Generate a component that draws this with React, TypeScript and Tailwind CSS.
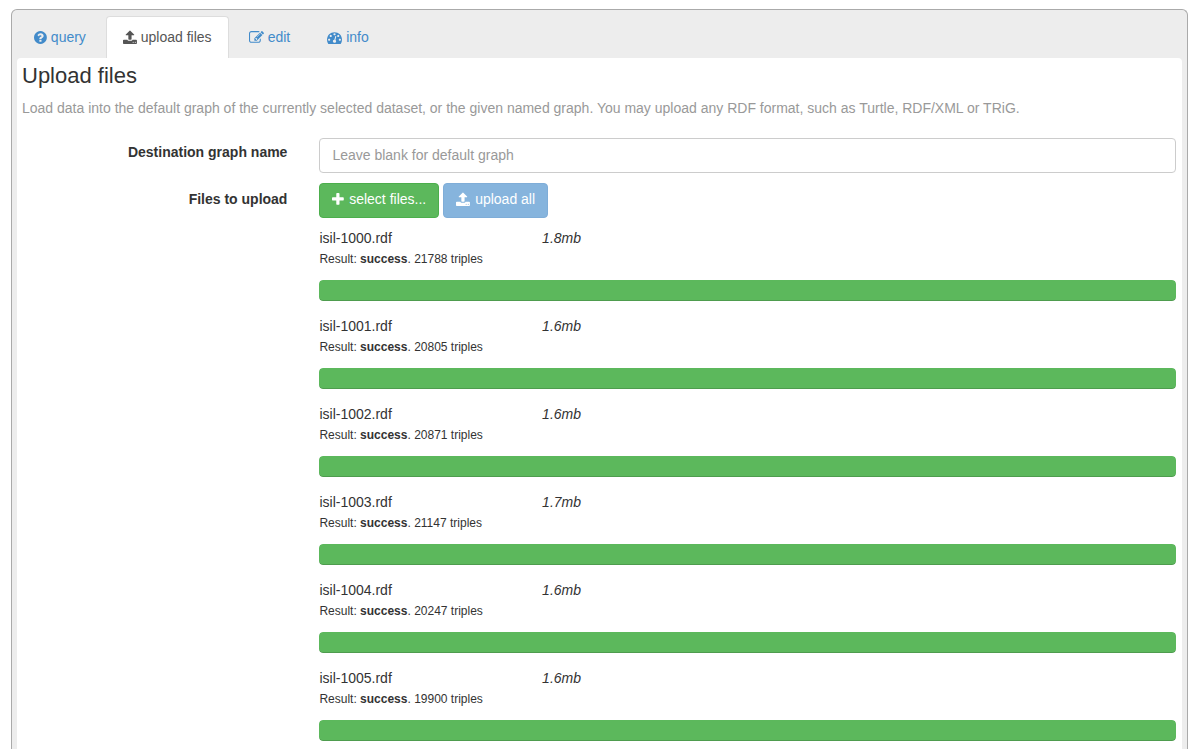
import React, { useState } from 'react';

const icons = {
  question: {
    viewBox: '128 0 1536 1792',
    path: 'M1024 1376v-192q0-14-9-23t-23-9h-192q-14 0-23 9t-9 23v192q0 14 9 23t23 9h192q14 0 23-9t9-23zm256-672q0-88-55.5-163t-138.5-116-170-41q-243 0-371 213-15 24 8 42l132 100q7 6 19 6 16 0 25-12 53-68 86-92 34-24 86-24 48 0 85.5 26t37.5 59q0 38-20 61t-68 45q-63 28-115.5 86.5t-52.5 125.5v36q0 14 9 23t23 9h192q14 0 23-9t9-23q0-19 21.5-49.5t54.5-49.5q32-18 49-28.5t46-35 44.5-48 28-60.5 12.5-81zm384 192q0 209-103 385.5t-279.5 279.5-385.5 103-385.5-103-279.5-279.5-103-385.5 103-385.5 279.5-279.5 385.5-103 385.5 103 279.5 279.5 103 385.5z',
  },
  upload: {
    viewBox: '64 0 1664 1792',
    path: 'M1344 1472q0-26-19-45t-45-19-45 19-19 45 19 45 45 19 45-19 19-45zm256 0q0-26-19-45t-45-19-45 19-19 45 19 45 45 19 45-19 19-45zm128-224v320q0 40-28 68t-68 28h-1472q-40 0-68-28t-28-68v-320q0-40 28-68t68-28h427q21 56 70.5 92t110.5 36h256q61 0 110.5-36t70.5-92h427q40 0 68 28t28 68zm-325-648q-17 40-59 40h-256v448q0 26-19 45t-45 19h-256q-26 0-45-19t-19-45v-448h-256q-42 0-59-40-17-39 14-69l448-448q18-19 45-19t45 19l448 448q31 30 14 69z',
  },
  edit: {
    viewBox: '0 0 1792 1792',
    path: 'M888 1184l116-116-152-152-116 116v56h96v96h56zm440-720q-16-16-33 1l-350 350q-17 17-1 33t33-1l350-350q17-17 1-33zm80 594v190q0 119-84.5 203.5t-203.5 84.5h-832q-119 0-203.5-84.5t-84.5-203.5v-832q0-119 84.5-203.5t203.5-84.5h832q63 0 117 25 15 7 18 23 3 17-9 29l-49 49q-14 14-32 8-23-6-45-6h-832q-66 0-113 47t-47 113v832q0 66 47 113t113 47h832q66 0 113-47t47-113v-126q0-13 9-22l64-64q15-15 35-7t20 29zm-96-738l288 288-672 672h-288v-288zm444 132l-92 92-288-288 92-92q28-28 68-28t68 28l152 152q28 28 28 68t-28 68z',
  },
  dashboard: {
    viewBox: '0 0 1792 1792',
    path: 'M384 1152q0-53-37.5-90.5t-90.5-37.5-90.5 37.5-37.5 90.5 37.5 90.5 90.5 37.5 90.5-37.5 37.5-90.5zm192-448q0-53-37.5-90.5t-90.5-37.5-90.5 37.5-37.5 90.5 37.5 90.5 90.5 37.5 90.5-37.5 37.5-90.5zm428 481l101-382q6-26-7.5-48.5t-38.5-29.5-48 6.5-30 39.5l-101 382q-60 5-107 43.5t-63 98.5q-20 77 20 146t117 89 146-20 89-117q16-60-6-117t-72-91zm660-33q0-53-37.5-90.5t-90.5-37.5-90.5 37.5-37.5 90.5 37.5 90.5 90.5 37.5 90.5-37.5 37.5-90.5zm-640-640q0-53-37.5-90.5t-90.5-37.5-90.5 37.5-37.5 90.5 37.5 90.5 90.5 37.5 90.5-37.5 37.5-90.5zm448 192q0-53-37.5-90.5t-90.5-37.5-90.5 37.5-37.5 90.5 37.5 90.5 90.5 37.5 90.5-37.5 37.5-90.5zm320 448q0 261-141 483-19 29-54 29h-1402q-35 0-54-29-141-221-141-483 0-182 71-348t191-286 286-191 348-71 348 71 286 191 191 286 71 348z',
  },
  plus: {
    viewBox: '192 0 1408 1792',
    path: 'M1600 736v192q0 40-28 68t-68 28h-416v416q0 40-28 68t-68 28h-192q-40 0-68-28t-28-68v-416h-416q-40 0-68-28t-28-68v-192q0-40 28-68t68-28h416v-416q0-40 28-68t68-28h192q40 0 68 28t28 68v416h416q40 0 68 28t28 68z',
  },
};

type IconName = keyof typeof icons;

const Icon = ({ name }: { name: IconName }) => (
  <svg viewBox={icons[name].viewBox} fill="currentColor" aria-hidden="true" className="h-[15px] w-auto shrink-0">
    <path d={icons[name].path} />
  </svg>
);

const tabs: { id: string; label: string; icon: IconName }[] = [
  { id: 'query', label: 'query', icon: 'question' },
  { id: 'upload', label: 'upload files', icon: 'upload' },
  { id: 'edit', label: 'edit', icon: 'edit' },
  { id: 'info', label: 'info', icon: 'dashboard' },
];

const files = [
  { name: 'isil-1000.rdf', size: '1.8mb', triples: 21788, progress: 100 },
  { name: 'isil-1001.rdf', size: '1.6mb', triples: 20805, progress: 100 },
  { name: 'isil-1002.rdf', size: '1.6mb', triples: 20871, progress: 100 },
  { name: 'isil-1003.rdf', size: '1.7mb', triples: 21147, progress: 100 },
  { name: 'isil-1004.rdf', size: '1.6mb', triples: 20247, progress: 100 },
  { name: 'isil-1005.rdf', size: '1.6mb', triples: 19900, progress: 100 },
];

const App = () => {
  const [graphName, setGraphName] = useState('');

  return (
    <div className="h-screen overflow-hidden bg-white pl-[11px] pr-3 pt-[9px] font-['Liberation_Sans',Arial,sans-serif] text-[14px] leading-[21px] text-[#333]">
      <div className="rounded-t-md border border-b-0 border-[#aaa] bg-[#ededed] px-[5px] pt-[6px]">
        <nav className="flex gap-[3px]">
          {tabs.map((tab) => (
            <a
              key={tab.id}
              href={`#${tab.id}`}
              className={
                tab.id === 'upload'
                  ? 'flex items-center gap-1 rounded-t border border-b-0 border-[#ddd] bg-white px-4 py-[10px] text-[#555]'
                  : 'flex items-center gap-1 rounded-t border border-b-0 border-transparent px-4 py-[10px] text-[#428bca]'
              }
            >
              <Icon name={tab.icon} />
              {tab.label}
            </a>
          ))}
        </nav>

        <main className="min-h-screen rounded-t-sm bg-white pl-[5px] pr-[6px] pt-1">
          <h1 className="text-[22px] leading-7">Upload files</h1>
          <p className="mt-2 text-[#999]">
            Load data into the default graph of the currently selected dataset, or the given named graph. You may upload any RDF format, such as Turtle, RDF/XML or TRiG.
          </p>

          <div className="mt-[19px] flex gap-8">
            <label htmlFor="graph-name" className="w-[23%] shrink-0 pt-1 text-right font-bold">
              Destination graph name
            </label>
            <input
              id="graph-name"
              type="text"
              value={graphName}
              onChange={(e) => setGraphName(e.target.value)}
              placeholder="Leave blank for default graph"
              className="h-[35px] min-w-0 flex-1 rounded border border-[#ccc] bg-white px-3 pb-[2px] placeholder:text-[#999]"
            />
          </div>

          <div className="mt-[10px] flex gap-8">
            <div className="w-[23%] shrink-0 pt-[6px] text-right font-bold">Files to upload</div>
            <div className="min-w-0 flex-1">
              <div className="flex gap-1">
                <button type="button" className="flex h-[35px] items-center gap-[5px] rounded border border-[#4cae4c] bg-[#5cb85c] px-3 pb-[2px] text-white">
                  <Icon name="plus" />
                  select files...
                </button>
                <button type="button" disabled className="flex h-[35px] items-center gap-[5px] rounded border border-[#7fadd8] bg-[#86b4dd] px-3 pb-[2px] text-white">
                  <Icon name="upload" />
                  upload all
                </button>
              </div>

              <ul className="mt-[10px]">
                {files.map((file) => (
                  <li key={file.name} className="mb-[15px]">
                    <div className="flex">
                      <span className="w-[26%]">{file.name}</span>
                      <em>{file.size}</em>
                    </div>
                    <p className="text-[12px]">
                      Result: <strong>success</strong>. {file.triples} triples
                    </p>
                    <div className="mt-[10px] h-[21px] overflow-hidden rounded bg-[#f5f5f5]">
                      <div
                        className="h-full rounded bg-[#5cb85c] shadow-[inset_0_-1px_0_rgba(0,0,0,0.15)]"
                        style={{ width: `${file.progress}%` }}
                      />
                    </div>
                  </li>
                ))}
              </ul>
            </div>
          </div>
        </main>
      </div>
    </div>
  );
};

export default App;
